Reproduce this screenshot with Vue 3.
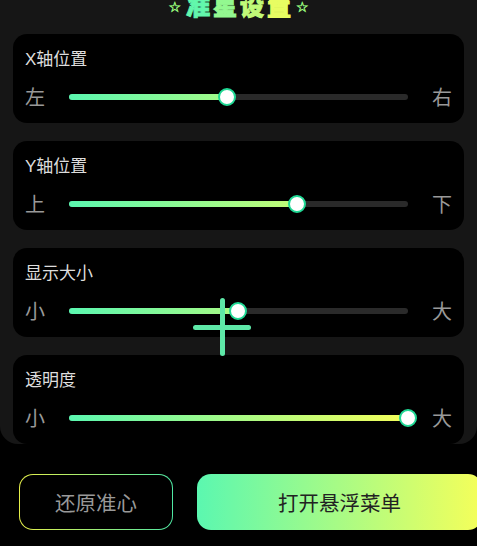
<script setup>
const sliders = [
  { title: 'X轴位置', min: '左', max: '右', value: 46.6 },
  { title: 'Y轴位置', min: '上', max: '下', value: 67.3 },
  { title: '显示大小', min: '小', max: '大', value: 49.9 },
  { title: '透明度', min: '小', max: '大', value: 100 }
]

// stroked letters can't use background-clip, so each one gets its gradient stop
const headChars = [
  { char: '准', color: '#62f7ac' },
  { char: '星', color: '#93f890' },
  { char: '设', color: '#c0fa78' },
  { char: '置', color: '#e8fd62' }
]

// gradient always spans the whole track, the fill only reveals part of it
function fillStyle(value) {
  return {
    width: value + '%',
    backgroundSize: (10000 / value) + '% 100%'
  }
}
</script>

<template>
  <div class="page">
    <div class="panel">
      <div class="head">
        <span class="star">☆</span>
        <span class="head-text">
          <span v-for="c in headChars" :key="c.char" :style="{ color: c.color, WebkitTextStrokeColor: c.color }">{{ c.char }}</span>
        </span>
        <span class="star">☆</span>
      </div>
      <div class="cards">
        <div v-for="item in sliders" :key="item.title" class="card">
          <div class="card-title">{{ item.title }}</div>
          <div class="row">
            <span class="side">{{ item.min }}</span>
            <div class="track">
              <div class="fill" :style="fillStyle(item.value)">
                <span class="thumb"></span>
              </div>
            </div>
            <span class="side">{{ item.max }}</span>
          </div>
        </div>
      </div>
    </div>

    <div class="actions">
      <button class="btn btn-reset">还原准心</button>
      <button class="btn btn-open">打开悬浮菜单</button>
    </div>

    <div class="crosshair">
      <i class="line-h"></i>
      <i class="line-v"></i>
    </div>
  </div>
</template>

<style>
html,
body {
  margin: 0;
  background: #000;
}
</style>

<style scoped>
.page {
  position: relative;
  width: 477px;
  height: 546px;
  overflow: hidden;
  background: #000;
  font-family: "Liberation Sans", "Noto Sans CJK SC", sans-serif;
}

.panel {
  height: 444px;
  padding: 0 13px;
  box-sizing: border-box;
  overflow: hidden;
  background: #161616;
  border-radius: 0 0 18px 18px;
}

.head {
  display: flex;
  justify-content: center;
  align-items: center;
  gap: 5px;
  height: 14px;
  margin-bottom: 20px;
  line-height: 14px;
  white-space: nowrap;
}

.head-text {
  font-size: 24px;
  font-weight: 900;
  letter-spacing: 3px;
  margin-right: -3px;
  -webkit-text-stroke-width: 1px;
}

.star {
  font-size: 14px;
  font-weight: bold;
  color: #96f47c;
  -webkit-text-stroke: 0.5px #96f47c;
  font-family: "DejaVu Sans", sans-serif;
}

.cards {
  display: flex;
  flex-direction: column;
  gap: 18px;
}

.card {
  padding: 14px 12px 14px;
  background: #000;
  border-radius: 14px;
}

.card-title {
  font-size: 17px;
  line-height: 24px;
  color: #ddd;
}

.row {
  display: flex;
  align-items: center;
  gap: 24px;
  height: 24px;
  margin-top: 13px;
}

.side {
  width: 20px;
  padding-top: 2px;
  font-size: 20px;
  line-height: 24px;
  color: #999;
}

.track {
  flex: 1;
  height: 6px;
  background: #2a2a2a;
  border-radius: 3px;
}

.fill {
  position: relative;
  height: 100%;
  border-radius: 3px;
  background-image: linear-gradient(90deg, #5bf7b0, #f5ff5a);
  background-repeat: no-repeat;
}

.thumb {
  position: absolute;
  top: 50%;
  right: -9px;
  width: 18px;
  height: 18px;
  box-sizing: border-box;
  margin-top: -9px;
  background: #fff;
  border: 2.5px solid #1fd894;
  border-radius: 50%;
}

.actions {
  display: flex;
  gap: 24px;
  padding: 30px 0 0 19px;
}

.btn {
  height: 56px;
  padding: 0;
  border-radius: 14px;
  font-family: inherit;
  font-size: 20.5px;
}

.btn-reset {
  flex: none;
  width: 154px;
  color: #999;
  border: 1.5px solid transparent;
  background: linear-gradient(#000, #000) padding-box,
    linear-gradient(90deg, #e6f04a, #4fe8a4) border-box;
}

/* runs a little past the right edge of the window */
.btn-open {
  flex: 1;
  margin-right: -5px;
  color: #222;
  border: none;
  background: linear-gradient(90deg, #5bf7b0, #f5ff5a);
}

/* floats over the sliders, not part of the page flow */
.crosshair {
  position: absolute;
  left: 193px;
  top: 298px;
  width: 58px;
  height: 58px;
}

.line-h,
.line-v {
  position: absolute;
  background: #5ee8a8;
  border-radius: 3px;
}

.line-h {
  left: 0;
  top: 27px;
  width: 58px;
  height: 4.5px;
}

.line-v {
  left: 27px;
  top: 0;
  width: 4.5px;
  height: 58px;
}
</style>
